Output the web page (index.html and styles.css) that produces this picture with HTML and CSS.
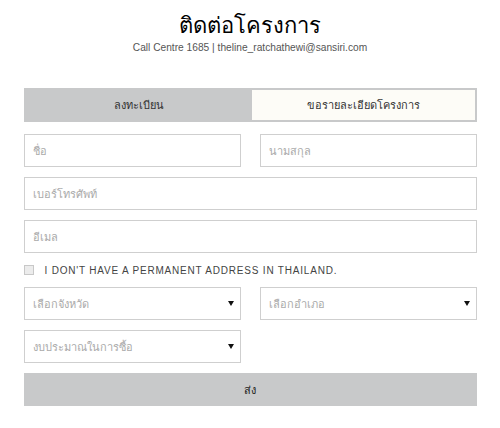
FILE: index.html
```html
<!DOCTYPE html>
<html lang="th">
<head>
<meta charset="utf-8">
<link rel="stylesheet" href="styles.css">
</head>
<body>
<div class="page">
  <h1 class="title">ติดต่อโครงการ</h1>
  <p class="sub">Call Centre 1685 | theline_ratchathewi@sansiri.com</p>
  <div class="tabs">
    <div class="tab active">ลงทะเบียน</div>
    <div class="tab">ขอรายละเอียดโครงการ</div>
  </div>
  <form class="form">
    <div class="row2">
      <div class="field">ชื่อ</div>
      <div class="field">นามสกุล</div>
    </div>
    <div class="field">เบอร์โทรศัพท์</div>
    <div class="field">อีเมล</div>
    <label class="check"><span class="box"></span><span class="check-text">I DON'T HAVE A PERMANENT ADDRESS IN THAILAND.</span></label>
    <div class="row2">
      <div class="field select">เลือกจังหวัด<span class="arrow"></span></div>
      <div class="field select">เลือกอำเภอ<span class="arrow"></span></div>
    </div>
    <div class="row2">
      <div class="field select">งบประมาณในการซื้อ<span class="arrow"></span></div>
      <div></div>
    </div>
    <div class="submit">ส่ง</div>
  </form>
</div>
</body>
</html>
```

FILE: styles.css
```css
* { box-sizing: border-box; }
body {
  margin: 0;
  background: #fff;
  font-family: "Liberation Sans", "Noto Sans", sans-serif;
  color: #222;
}
.page {
  width: 453px;
  margin: 0 auto;
  padding-top: 11px;
}
.title {
  margin: 0;
  text-align: center;
  font-size: 22px;
  font-weight: 400;
  line-height: 30px;
  color: #000;
}
.sub {
  margin: 0;
  text-align: center;
  font-size: 10.2px;
  line-height: 13px;
  color: #555;
}
.tabs {
  margin-top: 34px;
  display: grid;
  grid-template-columns: 226px 1fr;
  border: 2px solid #c8c9ca;
  height: 34px;
}
.tab {
  display: flex;
  align-items: center;
  justify-content: center;
  font-size: 11px;
  color: #333;
  background: #fdfcf7;
}
.tab.active {
  background: #c8c9ca;
}
.form {
  margin-top: 12px;
  display: flex;
  flex-direction: column;
  gap: 10px;
}
.row2 {
  display: grid;
  grid-template-columns: 217px 217px;
  justify-content: space-between;
}
.field {
  height: 33px;
  border: 1px solid #cfcfcf;
  display: flex;
  align-items: center;
  padding: 0 6px 0 8px;
  font-size: 11px;
  color: #aaa;
}
.select {
  justify-content: space-between;
}
.arrow {
  width: 0;
  height: 0;
  border-left: 3px solid transparent;
  border-right: 3px solid transparent;
  border-top: 5px solid #111;
}
.check {
  display: flex;
  align-items: center;
  gap: 11px;
  height: 14px;
  margin: 0;
}
.box {
  width: 10px;
  height: 10px;
  border: 1px solid #c8c8c8;
  background: #ececec;
}
.check-text {
  font-size: 10px;
  letter-spacing: 0.8px;
  color: #444;
}
.submit {
  height: 33px;
  background: #c8c9ca;
  display: flex;
  align-items: center;
  justify-content: center;
  font-size: 11px;
  color: #222;
}
```
